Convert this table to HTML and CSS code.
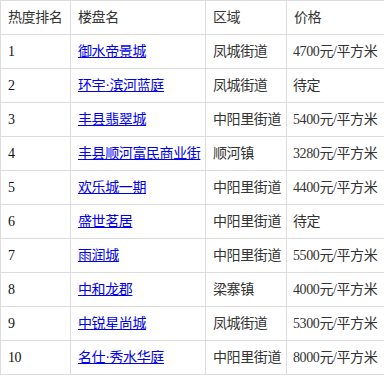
FILE: index.html
```html
<!DOCTYPE html>
<html lang="zh">
<head>
<meta charset="utf-8">
<link rel="stylesheet" href="styles.css">
</head>
<body>
<table class="rank">
  <thead>
    <tr><th class="c1">热度排名</th><th class="c2">楼盘名</th><th class="c3">区域</th><th class="c4">价格</th></tr>
  </thead>
  <tbody>
    <tr><td>1</td><td><a href="#">御水帝景城</a></td><td>凤城街道</td><td>4700元/平方米</td></tr>
    <tr><td>2</td><td><a href="#">环宇·滨河蓝庭</a></td><td>凤城街道</td><td>待定</td></tr>
    <tr><td>3</td><td><a href="#">丰县翡翠城</a></td><td>中阳里街道</td><td>5400元/平方米</td></tr>
    <tr><td>4</td><td><a href="#">丰县顺河富民商业街</a></td><td>顺河镇</td><td>3280元/平方米</td></tr>
    <tr><td>5</td><td><a href="#">欢乐城一期</a></td><td>中阳里街道</td><td>4400元/平方米</td></tr>
    <tr><td>6</td><td><a href="#">盛世茗居</a></td><td>中阳里街道</td><td>待定</td></tr>
    <tr><td>7</td><td><a href="#">雨润城</a></td><td>中阳里街道</td><td>5500元/平方米</td></tr>
    <tr><td>8</td><td><a href="#">中和龙郡</a></td><td>梁寨镇</td><td>4000元/平方米</td></tr>
    <tr><td>9</td><td><a href="#">中锐星尚城</a></td><td>凤城街道</td><td>5300元/平方米</td></tr>
    <tr><td>10</td><td><a href="#">名仕·秀水华庭</a></td><td>中阳里街道</td><td>8000元/平方米</td></tr>
  </tbody>
</table>
</body>
</html>
```

FILE: styles.css
```css
html, body {
  margin: 0;
  padding: 0;
  background: #fff;
}
.rank {
  width: 384px;
  border-collapse: collapse;
  table-layout: fixed;
  font-family: "Liberation Serif", "Noto Sans CJK SC", serif;
  font-size: 14px;
  letter-spacing: -0.4px;
  color: #333;
}
.rank th, .rank td {
  border: 1px solid #ddd;
  height: 34px;
  box-sizing: border-box;
  padding: 0 6px 0 7px;
  text-align: left;
  font-weight: normal;
  white-space: nowrap;
  vertical-align: middle;
  line-height: 20px;
}
.rank td:first-child { color: #111; }
.c1 { width: 70px; }
.c2 { width: 135px; }
.c3 { width: 81px; }
.c4 { width: 98px; }
.rank td:last-child { padding-left: 6px; }
.rank a {
  color: #0000ee;
  text-decoration: underline;
}
```
